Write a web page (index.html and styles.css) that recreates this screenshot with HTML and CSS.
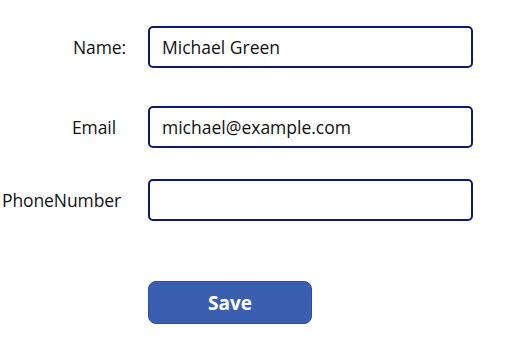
FILE: index.html
```html
<!DOCTYPE html>
<html lang="en">
<head>
    <meta charset="UTF-8">
    <meta name="viewport" content="width=device-width, initial-scale=1.0">
    <title>Contact form</title>
    <link rel="stylesheet" href="styles.css">
</head>
<body>

  <!-- contact form -->
  <div class="form">
    <div class="row row-name">
      <label class="label label-name" for="name">Name:</label>
      <input class="field" type="text" id="name" value="Michael Green">
    </div>
    <div class="row row-email">
      <label class="label label-email" for="email">Email</label>
      <input class="field" type="text" id="email" value="michael@example.com">
    </div>
    <div class="row row-phone">
      <label class="label label-phone" for="phone">PhoneNumber</label>
      <input class="field" type="text" id="phone" value="">
    </div>
    <div class="row row-save">
      <button class="save-btn">Save</button>
    </div>
  </div>

</body>
</html>
```

FILE: styles.css
```css
/* page */
body {
    font-family: 'Open Sans', 'Noto Sans', sans-serif;
    background-color: #ffffff;
    color: #111111;
    margin: 0;
}

.form {
    padding-top: 26px;
}

.row {
    display: flex;
    align-items: center;
}

.row-email {
    margin-top: 38px;
}

.row-phone {
    margin-top: 31px;
}

.row-save {
    margin-top: 60px;
    padding-left: 148px;
}

/* labels */
.label {
    width: 148px;
    box-sizing: border-box;
    font-size: 17.5px;
    letter-spacing: -0.1px;
}

.label-name {
    padding-left: 73px;
}

.label-email {
    padding-left: 72px;
}

.label-phone {
    padding-left: 2px;
}

/* text inputs */
.field {
    width: 325px;
    height: 42px;
    box-sizing: border-box;
    border: 2px solid #0d1b6e;
    border-radius: 5px;
    padding: 0 12px;
    font-family: inherit;
    font-size: 17.5px;
    color: #111111;
    outline: none;
}

/* save button */
.save-btn {
    width: 164px;
    height: 43px;
    background-color: #3a5fb0;
    border: 1px solid #2d4e9a;
    border-radius: 8px;
    color: #ffffff;
    font-family: inherit;
    font-size: 19px;
    font-weight: bold;
    cursor: pointer;
}
```
